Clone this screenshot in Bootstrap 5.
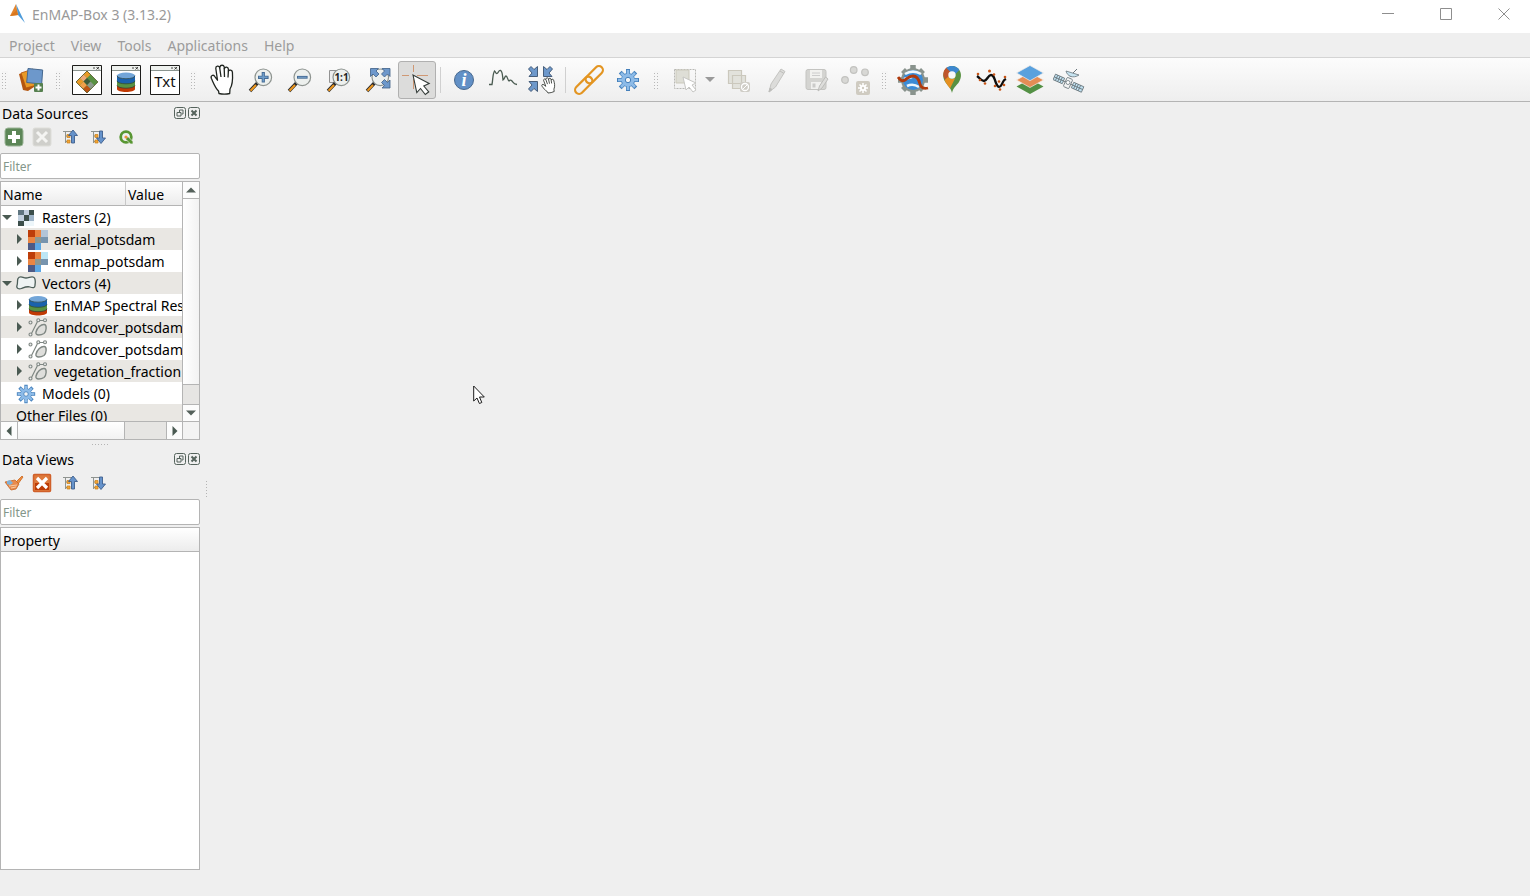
<!DOCTYPE html>
<html lang="en">
<head>
<meta charset="utf-8">
<meta name="viewport" content="width=device-width, initial-scale=1">
<title>EnMAP-Box 3 (3.13.2)</title>
<link href="https://cdn.jsdelivr.net/npm/bootstrap@5.3.0/dist/css/bootstrap.min.css" rel="stylesheet">
<style>
  body { background: #efefef; color: #000; font-family: "Noto Sans", "Open Sans", sans-serif; font-size: 14px; line-height: 20px; }
  button { background: none; border: 0; padding: 0; color: inherit; }
  svg { display: block; flex: none; }
  .titlebar { height: 33px; background: #fff; color: #999; }
  .window-buttons { gap: 6px; }
  .window-buttons button { width: 52px; height: 28px; }
  .menubar { height: 24px; padding-top: 1px; padding-left: 9px; gap: 16px; }
  .menubar a { color: #9c9c9c; text-decoration: none; }
  .toolbar-strip { height: 45px; gap: 1px; background: linear-gradient(#fcfcfc, #eeeeee); border-top: 1px solid #d4d4d4; border-bottom: 1px solid #b4b4b4; }
  .tool { width: 38px; height: 38px; border-radius: 3px; }
  .tool.active { background: #dcdcdb; border: 1px solid #b0b0b0; }
  .grip { width: 17px; height: 18px; }
  .grip::before { content: ""; display: block; width: 6px; height: 18px; margin: 0 auto; background: linear-gradient(#f5f5f5 2px, transparent 2px) 0 0 / 3px 3px, repeating-linear-gradient(90deg, #b8b8b8 0 1px, transparent 1px 3px); }
  .grip-first { width: 10px; }
  .toolsep { width: 7px; height: 26px; }
  .toolsep::before { content: ""; display: block; height: 100%; width: 1px; margin: 0 auto; background: #d0d0d0; }
  .drop-tool { width: 14px; height: 38px; }
  .sidebar { width: 200px; }
  .dock-title { height: 22px; gap: 2px; padding-left: 2px; }
  .dock-title h2 { font-size: 14px; line-height: 22px; padding-top: 1px; font-weight: 400; }
  .dock-tools { height: 26px; }
  .dock-tools button { width: 28px; height: 26px; }
  .filter-box { height: 26px; margin-top: 3px; border: 1px solid #b4b4b4; border-radius: 2px; padding: 0 2px; font-size: 12px; line-height: 24px; background: #fff; width: 100%; }
  .filter-box::placeholder { color: #84968a; opacity: 1; }
  .filter-box:focus { outline: 1px solid #6f97c4; }
  .view-frame { margin-top: 2px; border: 1px solid #b4b4b4; background: #fff; overflow: hidden; }
  .sources { height: 259px; }
  .tree { width: 100%; table-layout: fixed; border-collapse: separate; border-spacing: 0; white-space: nowrap; }
  .tree th { height: 24px; font-weight: 400; padding: 2px 2px 0; line-height: 21px; background: linear-gradient(#ffffff, #ececec); border-bottom: 1px solid #b4b4b4; }
  .tree th + th { border-left: 1px solid #c8c8c8; }
  .name-col { width: 124px; }
  .tree td { height: 22px; padding: 0; overflow: hidden; }
  .tree tbody tr:nth-child(even) { background: #e9e7e3; }
  .node { height: 22px; gap: 3px; line-height: 21px; padding-top: 1px; }
  .node-child { padding-left: 12px; }
  .node svg + span, .node button + svg + span { margin-left: 3px; }
  .node button { width: 12px; height: 22px; }
  .node-plain { padding-left: 15px; }
  .vbar { width: 17px; border-left: 1px solid #b4b4b4; background: #e6e5e3; }
  .vbar .step, .hbar .step { background: #fcfcfc; width: 16px; height: 16px; }
  .vbar .thumb { height: 187px; background: linear-gradient(90deg, #fff, #f2f2f2); border: solid #b4b4b4; border-width: 1px 0; }
  .vbar .step-down { border-top: 1px solid #b4b4b4; height: 17px; }
  .hbar { height: 18px; border-top: 1px solid #b4b4b4; background: #e6e5e3; }
  .hbar .step { height: 17px; }
  .hbar .thumb { width: 108px; background: linear-gradient(#fff, #f2f2f2); border: solid #b4b4b4; border-width: 0 1px; }
  .hbar .corner { width: 17px; background: #f3f3f3; border-left: 1px solid #b4b4b4; }
  .hbar .step-right { border-left: 1px solid #b4b4b4; }
  .splitter-h { height: 8px; }
  .dots-h { width: 17px; height: 1px; background: repeating-linear-gradient(90deg, #b4b4b4 0 1px, transparent 1px 3px); }
  .dots-v { width: 1px; height: 17px; background: repeating-linear-gradient(#b4b4b4 0 1px, transparent 1px 3px); }
  .splitter-v { width: 13px; padding-bottom: 20px; }
  .statusbar { height: 26px; }
  .pointer { position: absolute; left: 260px; top: 283px; }
</style>
</head>
<body>
<svg width="0" height="0" class="position-absolute" aria-hidden="true">
  <defs>
    <g id="win"><path d="M1.500 1.500h29v29h-29z" fill="#fff" stroke="#1d1d1b"/><path d="M2 2h28v4H2z" fill="#eef1ee"/><path d="M2 6.500h28" stroke="#8b9590"/><path d="M22 4h2M25.500 3l2.500 2.500m0-2.500l-2.500 2.500" stroke="#1d1d1b" stroke-width=".8" fill="none"/></g>
    <g id="cyl"><path d="M0 13v3.500c0 4 18 4 18 0V13z" fill="#c13a04"/><path d="M0 8v4.500c0 4 18 4 18 0V8z" fill="#589142"/><path d="M0 3v5c0 4 18 4 18 0V3z" fill="#1b62ad"/><ellipse cx="9" cy="3.200" rx="9" ry="3.200" fill="#72a5d8"/><path d="M0 8.300c0 4 18 4 18 0M0 12.700c0 4 18 4 18 0M0 3.200c0 4 18 4 18 0" fill="none" stroke="#263f3b" stroke-width=".7"/></g>
    <g id="lens"><path d="M12.500 19L5 27" stroke="#2b2b2b" stroke-width="3.400"/><path d="M11 21l-5.500 5.700" stroke="#f0991f" stroke-width="2"/><path d="M14 17l-2 2.400" stroke="#000" stroke-width="3"/><circle cx="18.300" cy="13.300" r="8.300" fill="#edf0ee" stroke="#8e9490" stroke-width="1.200"/></g>
    <g id="gear8"><g stroke="#4580bb" stroke-width="4"><path d="M16 5v22M5 16h22M8.200 8.200l15.600 15.600M23.800 8.200L8.200 23.800"/></g><circle cx="16" cy="16" r="7" fill="#4580bb"/><g stroke="#8dbbe8" stroke-width="2.600"><path d="M16 6v20M6 16h20M9 9l14 14M23 9L9 23"/></g><circle cx="16" cy="16" r="6.300" fill="#8dbbe8"/><circle cx="16" cy="16" r="2.700" fill="#f5f5f5" stroke="#4580bb"/></g>
    <g id="shapes" fill="none" stroke="#7f8783"><path d="M3 16.500L9.500 3.500M10.500 2.500H16.500" stroke-width="1.200"/><g fill="#eee" stroke-width="1.100"><circle cx="2.500" cy="4.500" r="1.500"/><circle cx="10.300" cy="2.300" r="1.500"/><circle cx="17" cy="2.300" r="1.500"/><circle cx="2.500" cy="16.500" r="1.500"/></g><path d="M8 14c1-4 5-8 8.500-7.500 2.500.5 2 7-.5 9-2.500 1.500-9 3-8-1.500z" fill="#dededb" stroke-width="1.400"/></g>
    <g id="pixels" shape-rendering="crispEdges"><path d="M0 0h7v7H0z" fill="#bd3d09"/><path d="M7 0h6v7H7zM0 7h7v6H0z" fill="#ea8542"/><path d="M7 7h6v6H7z" fill="#8e9891"/><path d="M13 7h7v6h-7z" fill="#7794ae"/><path d="M0 13h7v7H0z" fill="#4d5a85"/><path d="M7 13h6v7H7z" fill="#5ba7e4"/></g>
    <g id="treelines"><path d="M1 2.500H10M3.500 2.500V14M3.500 7h3M3.500 12.500h3" stroke="#8f9490" fill="none"/><path d="M5 5.500h3v3H5zM5 11h3v3H5z" fill="#f3a536" stroke="#c9811b" stroke-width=".7"/></g>
    <g id="floaty" fill="none" stroke="#55635c"><rect x=".5" y=".5" width="11" height="11" rx="2"/><path d="M3 5.500h4v3.500H3zM5.500 5V3H9v4H7.500"/></g>
    <g id="closey" fill="none" stroke="#55635c"><rect x=".5" y=".5" width="11" height="11" rx="2"/><path d="M3.500 3.500l5 5m0-5l-5 5" stroke-width="2"/></g>
    <path id="open" d="M1 8h10L6 13z" fill="#4a5a52"/>
    <path id="closed" d="M4 5l5 5-5 5z" fill="#4a5a52"/>
    <g id="hand" fill="#fff" stroke="#1f241f" stroke-width="1.300" stroke-linejoin="round"><path d="M13 29.500L12.500 27C9 23.500 7.500 19 5.400 14.500c-1.200-3 2-4.500 3.600-1.700l2.500 3.400L9.800 4.500c-.3-2.500 3.200-3.300 3.900-.7l.3-.8c.3-2.400 3.800-2.300 4.200 0l.3 1.500c.6-2 3.600-1.600 3.900.6v2c.8-1.700 3.800-1.200 4 1 .4 6 .9 11.500-2.400 16.900l-.3 4.500c-3 .8-7.700.8-10.700 0z"/><path d="M13.700 3.800L15 13M18.200 4l.3 9M22.400 6.500L22 13.500" fill="none"/></g>
  </defs>
</svg>

<div class="d-flex flex-column vh-100 overflow-hidden">
  <header class="titlebar d-flex align-items-start">
    <div class="d-flex align-items-center pt-1">
      <svg class="ms-2 me-1" width="20" height="22" viewBox="0 0 20 22"><path d="M8 0L2 12l8-1z" fill="#e4852c"/><path d="M8 0l9 19-7-8z" fill="#4d9bda"/><path d="M2 12l8-1-1-5z" fill="#d9771e"/></svg>
      <span>EnMAP-Box 3 (3.13.2)</span>
    </div>
    <div class="window-buttons d-flex ms-auto">
      <button type="button" aria-label="Minimize" class="d-flex align-items-center justify-content-center"><svg width="12" height="12"><path d="M0 5.500h12" stroke="#8e8e8e"/></svg></button>
      <button type="button" aria-label="Maximize" class="d-flex align-items-center justify-content-center"><svg width="12" height="12"><path d="M.5.500h11v11H.5z" fill="none" stroke="#8e8e8e"/></svg></button>
      <button type="button" aria-label="Close" class="d-flex align-items-center justify-content-center"><svg width="12" height="12"><path d="M.5.500l11 11m0-11l-11 11" stroke="#8e8e8e"/></svg></button>
    </div>
  </header>

  <nav class="menubar d-flex align-items-center" aria-label="Main menu">
    <a href="#">Project</a><a href="#">View</a><a href="#">Tools</a><a href="#">Applications</a><a href="#">Help</a>
  </nav>

  <div class="toolbar-strip d-flex align-items-center" role="toolbar" aria-label="Tools">
    <span class="grip grip-first"></span>
    <button type="button" class="tool d-flex align-items-center justify-content-center" aria-label="Add data source"><svg width="32" height="32" viewBox="-2 0 32 32"><path d="M3 10l13-4 5 15-9 6-5-1z" fill="#b4560f"/><path d="M5 9l12-4 4 16-11 3z" fill="#e99a26" stroke="#b4560f" stroke-width=".8"/><path d="M12 4.500L26.700 6l-1 14-15-1.500z" fill="#6d98cb" stroke="#45688f"/><rect x="18" y="19" width="9" height="9" rx="1" fill="#56804f"/><path d="M22.500 20.500v6M19.500 23.500h6" stroke="#fff" stroke-width="2"/></svg></button>
    <span class="grip"></span>
    <button type="button" class="tool d-flex align-items-center justify-content-center" aria-label="Open map window"><svg width="32" height="32"><use href="#win"/><g transform="translate(16 7) rotate(45)"><path d="M0 0h15.500v15.500H0z" fill="#589142"/><path d="M0 0h5v5H0zM0 10h5v5.500H0z" fill="#e99a26"/><path d="M0 5h5v5H0z" fill="#efa877"/><path d="M5 5h5v5H5z" fill="#3d5b3b"/><path d="M5 10h5v5.500H5z" fill="#f0a04b"/><path d="M10 10h5.500v5.500H10z" fill="#bd5414"/><path d="M10 5h5.500v5H10z" fill="#8c9a8c"/><path d="M0 0h15.500v15.500H0z" fill="none" stroke="#4f4f20" stroke-width=".7"/></g></svg></button>
    <button type="button" class="tool d-flex align-items-center justify-content-center" aria-label="Open spectral library window"><svg width="32" height="32"><use href="#win"/><use href="#cyl" x="7" y="8.500"/></svg></button>
    <button type="button" class="tool d-flex align-items-center justify-content-center" aria-label="Open text window"><svg width="32" height="32"><use href="#win"/><text x="16" y="23" text-anchor="middle" font-size="15" fill="#111">Txt</text></svg></button>
    <span class="grip"></span>
    <button type="button" class="tool d-flex align-items-center justify-content-center" aria-label="Pan"><svg width="32" height="32"><use href="#hand"/></svg></button>
    <button type="button" class="tool d-flex align-items-center justify-content-center" aria-label="Zoom in"><svg width="32" height="32"><use href="#lens"/><path d="M18.300 8v10.600M13 13.300h10.600" stroke="#466c96" stroke-width="3.200"/><path d="M18.300 9v8.600M14 13.300h8.600" stroke="#6d9cc9" stroke-width="1.500"/></svg></button>
    <button type="button" class="tool d-flex align-items-center justify-content-center" aria-label="Zoom out"><svg width="32" height="32"><use href="#lens"/><path d="M13 13.300h10.600" stroke="#466c96" stroke-width="2.800"/><path d="M14 13.300h8.600" stroke="#79a2c8" stroke-width="1"/></svg></button>
    <button type="button" class="tool d-flex align-items-center justify-content-center" aria-label="Zoom to native resolution"><svg width="32" height="32"><path d="M6.500 6.500h12v12h-12z" fill="#eee" stroke="#929292"/><use href="#lens"/><text x="18.500" y="17" text-anchor="middle" font-size="10" font-weight="700" fill="#222">1:1</text></svg></button>
    <button type="button" class="tool d-flex align-items-center justify-content-center" aria-label="Zoom full"><svg width="32" height="32"><use href="#lens"/><g fill="#6d98cb" stroke="#3f5f86" stroke-width=".8"><path id="exar" d="M8.500 4.500h8L14 7l3 3-3 3-3-3-2.500 2.500z"/><use href="#exar" transform="matrix(-1 0 0 1 36.500 0)"/><use href="#exar" transform="matrix(-1 0 0 -1 36.500 28.500)"/></g></svg></button>
    <button type="button" class="tool active d-flex align-items-center justify-content-center" aria-label="Identify cursor location" aria-pressed="true"><svg width="32" height="32"><path d="M12.500 1v7M12.500 15v10M1 11.500h7M16 11.500h11" stroke="#cf9874"/><path d="M12 11l3.800 17.500 3.700-4 4.800 6 3.500-2.700-5-5.800 5.400-2.500z" fill="#fff" stroke="#333b38" stroke-width="1.100"/></svg></button>
    <span class="toolsep"></span>
    <button type="button" class="tool d-flex align-items-center justify-content-center" aria-label="Identify"><svg width="32" height="32"><circle cx="16" cy="16" r="9.500" fill="#6290c6" stroke="#48698f"/><text x="16" y="22" text-anchor="middle" font-family="Liberation Serif, serif" font-style="italic" font-weight="700" font-size="18" fill="#fff">i</text></svg></button>
    <button type="button" class="tool d-flex align-items-center justify-content-center" aria-label="Identify spectral profile"><svg width="32" height="32"><path d="M2 20.500h3c1-5 .5-10 2.500-13.500C9 8 8.500 10 10 9.500S11.500 6 13.500 6.500s2 5 2.500 9.500c2-1 1.500-4 3-4s1.500 4 3 5c1-1.500 2-1 3 0s1.500 3 5 3.500" fill="none" stroke="#4a5b51" stroke-width="1.300"/></svg></button>
    <button type="button" class="tool d-flex align-items-center justify-content-center" aria-label="Move to pixel center"><svg width="32" height="32"><g fill="#6d98cb" stroke="#3b526f" stroke-width=".9"><path id="inar" d="M2.500 5l2.500-2.500L8 5.500l3.500-3V12.500H3l3-3.500z"/><use href="#inar" transform="matrix(-1 0 0 1 29 0)"/><use href="#inar" transform="matrix(1 0 0 -1 0 30)"/></g><g transform="matrix(.58 -.14 .1 .52 11.500 15.500)"><use href="#hand"/></g></svg></button>
    <span class="toolsep"></span>
    <button type="button" class="tool d-flex align-items-center justify-content-center" aria-label="Link maps"><svg width="32" height="32"><g transform="rotate(-45 16 16)" fill="none" stroke="#e39522" stroke-width="2.200"><rect x="-2" y="12" width="21" height="8" rx="4"/><rect x="13" y="12" width="21" height="8" rx="4"/></g></svg></button>
    <button type="button" class="tool d-flex align-items-center justify-content-center" aria-label="Settings"><svg width="32" height="32"><use href="#gear8"/></svg></button>
    <span class="grip"></span>
    <button type="button" class="tool d-flex align-items-center justify-content-center" aria-label="Select features" disabled><svg width="32" height="32"><path d="M5.500 5.500h21v19h-21z" fill="none" stroke="#b8b8b5" stroke-dasharray="2 1"/><path d="M7 6h13v13H7z" fill="#deded6" stroke="#cbc9bb"/><path d="M14 13l3 13 3-3 4 5 3-2-4-5 4-2z" fill="#fff" stroke="#c6c6c3"/></svg></button>
    <button type="button" class="drop-tool d-flex align-items-center justify-content-start" aria-label="Selection modes"><svg width="10" height="6"><path d="M0 0h10L5 5z" fill="#9a9a9a"/></svg></button>
    <button type="button" class="tool d-flex align-items-center justify-content-center" aria-label="Deselect features" disabled><svg width="32" height="32"><path d="M5.500 6.500h13v13h-13zM9.500 11.500h13v13h-13z" fill="#e2e2dc" stroke="#cbc8bd" stroke-width="1.200"/><rect x="17" y="18" width="10" height="10" rx="2" fill="#cfcdc6"/><circle cx="22" cy="23" r="3.500" fill="none" stroke="#fff" stroke-width="1.300"/><path d="M19.500 25.500l5-5" stroke="#fff"/></svg></button>
    <button type="button" class="tool d-flex align-items-center justify-content-center" aria-label="Toggle editing" disabled><svg width="32" height="32"><path d="M7 28l2-8L19 5l4 2.500L13.500 23z" fill="#dcdcda" stroke="#c4c4c1"/><path d="M7 28l1-4 2 1.500zM18 7l4 2.500" fill="#bbb" stroke="#bebebb"/></svg></button>
    <button type="button" class="tool d-flex align-items-center justify-content-center" aria-label="Save edits" disabled><svg width="32" height="32"><rect x="5" y="5.500" width="20" height="20" rx="2" fill="#d4d4d1" stroke="#c4c4c1"/><path d="M9 6h12v8H9zM10 18h10v7H10z" fill="#f1f1ef"/><path d="M11 9h8M11 11.500h8" stroke="#ccc"/><path d="M11.500 19.500h3v4h-3z" fill="#cbcbc9"/><path d="M17 27l1.500-5 6-9 2.500 2-6 9z" fill="#dededc" stroke="#bdbdba"/></svg></button>
    <button type="button" class="tool d-flex align-items-center justify-content-center" aria-label="Digitizing options" disabled><svg width="32" height="32"><g fill="#d8d8d5" stroke="#c2c2bf" stroke-width="1.200"><circle cx="13.700" cy="6" r="3.300"/><circle cx="25" cy="8.300" r="3.300"/><circle cx="5" cy="16" r="3.300"/></g><rect x="16" y="17" width="14" height="14" rx="2" fill="#cfcbc1"/><path d="M23 19v10M18 24h10M19.500 20.500l7 7m0-7l-7 7" stroke="#fff" stroke-width="1.500"/><circle cx="23" cy="24" r="3" fill="#fff"/><circle cx="23" cy="24" r="1.200" fill="#cfcbc1"/></svg></button>
    <span class="grip"></span>
    <button type="button" class="tool d-flex align-items-center justify-content-center" aria-label="EnMAP-Box processing"><svg width="32" height="32"><path d="M16 1v30M1 16h30M6 6l20 20M26 6L6 26" stroke="#89938d" stroke-width="5.500"/><circle cx="16" cy="16" r="12" fill="#89938d"/><circle cx="16" cy="16" r="10" fill="#3b8bd6"/><path d="M8 10c5-3 11-3 16 0M7 15c3-1 5-1 8-2M10 22c4-2 9-1 12 1" stroke="#eef6fc" stroke-width="2.600" fill="none"/><path d="M1 13c2 3 4 5 7 3s4-4 8-4 6 4 7 8 4 5 8 4" fill="none" stroke="#b03a0c" stroke-width="2.800"/></svg></button>
    <button type="button" class="tool d-flex align-items-center justify-content-center" aria-label="Locate"><svg width="32" height="32"><path d="M16 29c-1-5-4-7-6-10-6-8-1-17 6-17s12 8 7 16c-2 3-6 6-7 11z" fill="#589142"/><path d="M7.300 10c.2-3 1.500-5.500 3.700-6.700L16 9l-6.500 7C8 14 7 12 7.300 10z" fill="#bf562b"/><path d="M10.500 4C14 .8 20.500 1.500 23.300 6L18 11.500z" fill="#3d88d0"/><path d="M8.500 16l4-3.500c2 3.500 5 3 7 1L14 24.500l-4-5.500z" fill="#e59022"/><circle cx="16" cy="11" r="3.700" fill="#f7f7f7"/></svg></button>
    <button type="button" class="tool d-flex align-items-center justify-content-center" aria-label="Profile analytics"><svg width="32" height="32"><path d="M2 12c3 2 4 5 7 5s4-6 7-6 3 3 5 8 4 5 6 1 2-4 4-5" fill="none" stroke="#0d0d0d" stroke-width="2.300"/><g fill="#c85517"><circle cx="3" cy="10" r="1.300"/><circle cx="5" cy="16" r="1.300"/><circle cx="10" cy="19.500" r="1.300"/><circle cx="14.500" cy="7" r="1.500"/><circle cx="19" cy="10.500" r="1.300"/><circle cx="20" cy="22" r="1.300"/><circle cx="25" cy="25.500" r="1.300"/><circle cx="24" cy="17.500" r="1.300"/><circle cx="29" cy="21" r="1.300"/><circle cx="30" cy="13" r="1.300"/></g></svg></button>
    <button type="button" class="tool d-flex align-items-center justify-content-center" aria-label="Layers"><svg width="32" height="32"><path d="M2.500 22.500L16 15l13.500 7.500L16 30z" fill="#539044"/><path d="M2.500 16L16 8.500 29.500 16 16 23.500z" fill="#e58d55" stroke="#f5eee8" stroke-width=".7"/><path d="M2.500 9L16 1.500 29.500 9 16 16.700z" fill="#59a1de" stroke="#f5eee8" stroke-width=".7"/></svg></button>
    <button type="button" class="tool d-flex align-items-center justify-content-center" aria-label="Satellite"><svg width="32" height="32"><g transform="rotate(24 15 19)" stroke="#68757b" stroke-width=".8"><path d="M0 16h10v6H0zM20 16h11v6H20z" fill="#bfe0f0"/><path d="M2.500 16v6M5 16v6M7.500 16v6M0 19h10M22.500 16v6M25 16v6M27.500 16v6M20 19h11M10 19h10" fill="none"/><rect x="12" y="14" width="6" height="10" rx="1" fill="#f4f4f4"/></g><path d="M17 13l3-4 4-4" stroke="#68757b" fill="none"/><path d="M13 7c1 5 7 8 13 4z" fill="#c7e4f1" stroke="#68757b" stroke-width=".8"/><circle cx="15" cy="18.500" r="2" fill="#fff" stroke="#68757b" stroke-width=".8"/></svg></button>
  </div>

  <div class="d-flex flex-grow-1 overflow-hidden">
    <aside class="sidebar d-flex flex-column flex-shrink-0">
      <section aria-labelledby="sources-title">
        <div class="dock-title d-flex align-items-center">
          <h2 id="sources-title" class="m-0 me-auto">Data Sources</h2>
          <button type="button" aria-label="Float panel"><svg width="12" height="12"><use href="#floaty"/></svg></button>
          <button type="button" aria-label="Close panel"><svg width="12" height="12"><use href="#closey"/></svg></button>
        </div>
        <div class="dock-tools d-flex">
          <button type="button" class="d-flex align-items-center justify-content-center" aria-label="Add source"><svg width="20" height="20"><rect x="1" y="1" width="18" height="18" rx="3" fill="#5c8657" stroke="#9ab396"/><path d="M10 4v12M4 10h12" stroke="#fff" stroke-width="4"/></svg></button>
          <button type="button" class="d-flex align-items-center justify-content-center" aria-label="Remove source" disabled><svg width="20" height="20"><rect x="1" y="1" width="18" height="18" rx="2" fill="#cfcfcb" stroke="#deded9"/><path d="M5 5l10 10m0-10L5 15" stroke="#f4f4f2" stroke-width="3"/></svg></button>
          <button type="button" class="d-flex align-items-center justify-content-center" aria-label="Collapse all"><svg width="16" height="16"><use href="#treelines"/><path d="M11 1l4.500 5.500h-3V14h-3V6.500h-3z" fill="#6693cb" stroke="#3e5f8c" stroke-width=".9"/></svg></button>
          <button type="button" class="d-flex align-items-center justify-content-center" aria-label="Expand all"><svg width="16" height="16"><use href="#treelines"/><path d="M9.500 2h3v7h3L11 14.500 6.500 9h3z" fill="#6693cb" stroke="#3e5f8c" stroke-width=".9"/></svg></button>
          <button type="button" class="d-flex align-items-center justify-content-center" aria-label="Synchronise with QGIS"><svg width="16" height="16"><circle cx="8" cy="8" r="5.300" fill="none" stroke="#589632" stroke-width="2.800"/><path d="M8 8h2.500l4.500 4.500V15h-2.500L8 10.500z" fill="#589632" stroke="#eee" stroke-width=".7"/><circle cx="8" cy="8" r="1.600" fill="#ee913a"/></svg></button>
        </div>
        <input type="text" class="filter-box d-block" placeholder="Filter" aria-label="Filter data sources">
        <div class="view-frame sources d-flex flex-column">
          <div class="d-flex flex-grow-1 overflow-hidden">
            <div class="flex-grow-1 overflow-hidden">
              <table class="tree">
                <thead><tr><th class="name-col" scope="col">Name</th><th scope="col">Value</th></tr></thead>
                <tbody>
                  <tr><td colspan="2"><div class="node d-flex align-items-center"><button type="button" aria-label="Collapse"><svg width="12" height="22"><use href="#open"/></svg></button><svg width="20" height="20"><g transform="translate(2 2)" shape-rendering="crispEdges"><path d="M0 0h16v16H0z" fill="#edf6fa"/><path d="M0 0h6v5H0zM11 5h5v6h-5zM0 11h6v5H0z" fill="#9eb4c8"/><path d="M6 0h5v5H6zM0 5h6v6H0z" fill="#c2d0df"/><path d="M11 0h5v5h-5zM6 5h5v6H6zM0 11h6v5H0z" fill="#3c4f4b"/><path d="M0 0h6v5H0z" fill="#5f7580"/></g></svg><span>Rasters (2)</span></div></td></tr>
                  <tr><td colspan="2"><div class="node node-child d-flex align-items-center"><button type="button" aria-label="Expand"><svg width="12" height="22"><use href="#closed"/></svg></button><svg width="20" height="20"><use href="#pixels"/><path d="M13 0h7v7h-7z" fill="#b2c4d8"/></svg><span>aerial_potsdam</span></div></td></tr>
                  <tr><td colspan="2"><div class="node node-child d-flex align-items-center"><button type="button" aria-label="Expand"><svg width="12" height="22"><use href="#closed"/></svg></button><svg width="20" height="20"><use href="#pixels"/><path d="M13 0h7v7h-7z" fill="#bde6f5"/></svg><span>enmap_potsdam</span></div></td></tr>
                  <tr><td colspan="2"><div class="node d-flex align-items-center"><button type="button" aria-label="Collapse"><svg width="12" height="22"><use href="#open"/></svg></button><svg width="20" height="20"><path d="M2 4.500c2-3.500 5-.5 8-.5s7-3 8.500 0 .5 5 .5 7.500-2 2.500-5 1.500-6 .5-8.500 1.500-5.500 0-4.500-3 0-4.500 1-7z" fill="#eef3f3" stroke="#4c5d58" stroke-width="1.300"/></svg><span>Vectors (4)</span></div></td></tr>
                  <tr><td colspan="2"><div class="node node-child d-flex align-items-center"><button type="button" aria-label="Expand"><svg width="12" height="22"><use href="#closed"/></svg></button><svg width="20" height="20"><use href="#cyl" x="1" y="0"/></svg><span>EnMAP Spectral Response</span></div></td></tr>
                  <tr><td colspan="2"><div class="node node-child d-flex align-items-center"><button type="button" aria-label="Expand"><svg width="12" height="22"><use href="#closed"/></svg></button><svg width="20" height="20"><use href="#shapes"/></svg><span>landcover_potsdam_point</span></div></td></tr>
                  <tr><td colspan="2"><div class="node node-child d-flex align-items-center"><button type="button" aria-label="Expand"><svg width="12" height="22"><use href="#closed"/></svg></button><svg width="20" height="20"><use href="#shapes"/></svg><span>landcover_potsdam_polygon</span></div></td></tr>
                  <tr><td colspan="2"><div class="node node-child d-flex align-items-center"><button type="button" aria-label="Expand"><svg width="12" height="22"><use href="#closed"/></svg></button><svg width="20" height="20"><use href="#shapes"/></svg><span>vegetation_fraction</span></div></td></tr>
                  <tr><td colspan="2"><div class="node node-plain d-flex align-items-center"><svg width="20" height="20" viewBox="4 4 24 24"><use href="#gear8"/></svg><span>Models (0)</span></div></td></tr>
                  <tr><td colspan="2"><div class="node node-plain">Other Files (0)</div></td></tr>
                </tbody>
              </table>
            </div>
            <div class="vbar d-flex flex-column flex-shrink-0">
              <button type="button" class="step d-flex align-items-center justify-content-center" aria-label="Scroll up"><svg width="10" height="6"><path d="M0 5.500h10L5 .5z" fill="#55615b"/></svg></button>
              <div class="thumb"></div>
              <button type="button" class="step step-down d-flex align-items-center justify-content-center mt-auto" aria-label="Scroll down"><svg width="10" height="6"><path d="M0 .5h10l-5 5z" fill="#55615b"/></svg></button>
            </div>
          </div>
          <div class="hbar d-flex flex-shrink-0">
            <button type="button" class="step d-flex align-items-center justify-content-center" aria-label="Scroll left"><svg width="6" height="10"><path d="M5.500 0v10L.5 5z" fill="#4a5a52"/></svg></button>
            <div class="thumb"></div>
            <button type="button" class="step step-right d-flex align-items-center justify-content-center ms-auto" aria-label="Scroll right"><svg width="6" height="10"><path d="M.5 0v10l5-5z" fill="#4a5a52"/></svg></button>
            <div class="corner"></div>
          </div>
        </div>
      </section>
      <div class="splitter-h d-flex align-items-center justify-content-center"><div class="dots-h"></div></div>
      <section class="d-flex flex-column flex-grow-1" aria-labelledby="views-title">
        <div class="dock-title d-flex align-items-center">
          <h2 id="views-title" class="m-0 me-auto">Data Views</h2>
          <button type="button" aria-label="Float panel"><svg width="12" height="12"><use href="#floaty"/></svg></button>
          <button type="button" aria-label="Close panel"><svg width="12" height="12"><use href="#closey"/></svg></button>
        </div>
        <div class="dock-tools d-flex">
          <button type="button" class="d-flex align-items-center justify-content-center" aria-label="Layer styling"><svg width="20" height="18"><path d="M12 8l6-6 1 1-5 7z" fill="#ef8f3f" stroke="#c9661f" stroke-width=".8"/><path d="M1 8l10-2 4 4-3 5-5 1z" fill="#e98a4c" stroke="#c46626" stroke-width=".8"/><path d="M3 7l3-1 3 3-3 2-3-1z" fill="#7fb1d8"/><path d="M5 12l8-1M7 14l5-1" stroke="#f7c9a0"/></svg></button>
          <button type="button" class="d-flex align-items-center justify-content-center" aria-label="Remove view"><svg width="20" height="20"><rect x="1.500" y="1.500" width="17" height="17" rx="1" fill="#de7a3c" stroke="#d0602a" stroke-width="1.500"/><path d="M3 10h14v7H3z" fill="#bd3c06"/><path d="M5 5l10 10m0-10L5 15" stroke="#fff" stroke-width="3.200"/></svg></button>
          <button type="button" class="d-flex align-items-center justify-content-center" aria-label="Collapse all"><svg width="16" height="16"><use href="#treelines"/><path d="M11 1l4.500 5.500h-3V14h-3V6.500h-3z" fill="#6693cb" stroke="#3e5f8c" stroke-width=".9"/></svg></button>
          <button type="button" class="d-flex align-items-center justify-content-center" aria-label="Expand all"><svg width="16" height="16"><use href="#treelines"/><path d="M9.500 2h3v7h3L11 14.500 6.500 9h3z" fill="#6693cb" stroke="#3e5f8c" stroke-width=".9"/></svg></button>
        </div>
        <input type="text" class="filter-box d-block" placeholder="Filter" aria-label="Filter data views">
        <div class="view-frame flex-grow-1">
          <table class="tree"><thead><tr><th scope="col">Property</th></tr></thead></table>
        </div>
      </section>
      <div class="statusbar flex-shrink-0"></div>
    </aside>
    <div class="splitter-v d-flex align-items-center justify-content-center"><div class="dots-v"></div></div>
    <main class="flex-grow-1 position-relative" aria-label="Workspace">
      <svg class="pointer" width="12" height="20" viewBox="0 0 12 20"><path d="M.7 1v15l3.300-3 2.400 5.500 2.400-1L6.500 12h4.800z" fill="#fff" stroke="#1c1c1c" stroke-width="1"/></svg>
    </main>
  </div>
</div>
<script src="https://cdn.jsdelivr.net/npm/bootstrap@5.3.0/dist/js/bootstrap.bundle.min.js"></script>
</body>
</html>
